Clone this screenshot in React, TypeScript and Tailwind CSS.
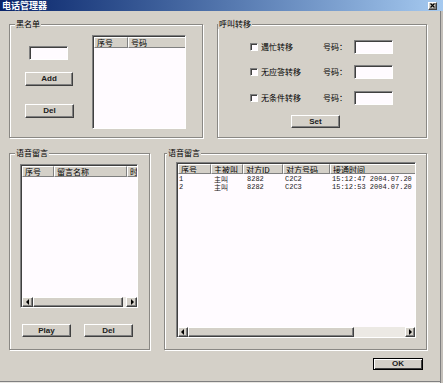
import React from 'react';

const raised =
  'border border-t-white border-l-white border-r-[#404040] border-b-[#404040] shadow-[inset_-1px_-1px_0_#808080] bg-[#d4d0c8]';
const sunken =
  'border border-t-[#808080] border-l-[#808080] border-r-white border-b-white shadow-[inset_1px_1px_0_#404040] bg-[#fffbff]';

interface BtnProps {
  label: string;
  className?: string;
  strong?: boolean;
}

const Btn: React.FC<BtnProps> = ({ label, className = '', strong }) => (
  <div
    className={`flex items-center justify-center text-[8px] font-bold leading-none text-[#202020] font-['Liberation_Sans',sans-serif] ${
      strong
        ? 'border border-black shadow-[inset_1px_1px_0_#fff,inset_-1px_-1px_0_#404040] bg-[#d4d0c8]'
        : raised
    } ${className}`}
  >
    {label}
  </div>
);

interface GroupProps {
  title: string;
  className?: string;
  labelClass?: string;
  children?: React.ReactNode;
}

const Group: React.FC<GroupProps> = ({ title, className = '', labelClass = 'left-[5px]', children }) => (
  <div className={`relative border border-[#8a8884] shadow-[inset_1px_1px_0_#fff,1px_1px_0_#fff] ${className}`}>
    <span className={`absolute -top-[6px] bg-[#d4d0c8] px-[1px] text-[8px] leading-[10px] text-black ${labelClass}`}>
      {title}
    </span>
    {children}
  </div>
);

const Arrow: React.FC<{ dir: 'left' | 'right'; className?: string }> = ({ dir, className = '' }) => (
  <div className={`flex h-full items-center justify-center ${raised} ${className}`}>
    <svg width="4" height="6" viewBox="0 0 4 6">
      {dir === 'left' ? <polygon points="3,0 3,6 0,3" fill="#000" /> : <polygon points="1,0 1,6 4,3" fill="#000" />}
    </svg>
  </div>
);

interface ScrollProps {
  arrow: string;
  thumb: string;
}

const HScroll: React.FC<ScrollProps> = ({ arrow, thumb }) => (
  <div className="flex h-[10px] shrink-0 bg-[#ece9e4]">
    <Arrow dir="left" className={arrow} />
    <div className={`h-full ${raised} ${thumb}`} />
    <div className="flex-1" />
    <Arrow dir="right" className={arrow} />
  </div>
);

interface Col {
  label: string;
  w: string;
}

const Header: React.FC<{ cols: Col[]; h: string }> = ({ cols, h }) => (
  <div className={`flex shrink-0 bg-[#d4d0c8] ${h}`}>
    {cols.map((c) => (
      <div
        key={c.label}
        className={`shrink-0 overflow-hidden whitespace-nowrap border-t border-l border-t-white border-l-white border-r border-b border-r-[#808080] border-b-[#808080] pl-[2px] text-[8px] leading-[9px] text-black ${c.w}`}
      >
        {c.label}
      </div>
    ))}
  </div>
);

const rows = [
  ['1', '主叫', '8282', 'C2C2', '15:12:47 2004.07.20'],
  ['2', '主叫', '8282', 'C2C3', '15:12:53 2004.07.20'],
];

export default function App() {
  return (
    <div className="flex h-[383px] w-[443px] flex-col overflow-hidden bg-[#d4d0c8] font-['Noto_Sans_CJK_SC',sans-serif] text-black">
      <div className="flex h-[11px] shrink-0 items-center justify-between bg-gradient-to-r from-[#0a246a] to-[#a6caf0] pl-[2px] pr-[6px]">
        <span className="text-[9px] font-bold leading-none text-white">电话管理器</span>
        <div className={`flex h-[8px] w-[9px] items-center justify-center ${raised}`}>
          <svg width="5" height="5" viewBox="0 0 5 5">
            <path d="M0.5 0.5L4.5 4.5M4.5 0.5L0.5 4.5" stroke="#000" strokeWidth="1.2" />
          </svg>
        </div>
      </div>

      <div className="flex flex-1">
        <div className="flex w-[440px] flex-col">
          {/* top row */}
          <div className="mt-[13px] flex gap-[14px] pl-[9px]">
            <Group title="黑名单" className="h-[114px] w-[194px]">
              <div className="flex pl-[15px] pt-[10px]">
                <div className="flex w-[49px] flex-col">
                  <div className={`ml-[4px] mt-[11px] h-[14px] w-[39px] ${sunken}`} />
                  <Btn label="Add" className="mt-[12px] h-[14px] w-[48px]" />
                  <Btn label="Del" className="mt-[18px] h-[14px] w-[49px]" />
                </div>
                <div className={`ml-[18px] flex h-[94px] w-[94px] flex-col overflow-hidden pl-[1px] pt-[1px] ${sunken}`}>
                  <Header
                    h="h-[11px]"
                    cols={[
                      { label: '序号', w: 'w-[34px]' },
                      { label: '号码', w: 'w-[58px]' },
                    ]}
                  />
                </div>
              </div>
            </Group>

            <Group title="呼叫转移" className="h-[114px] w-[210px]" labelClass="left-[0px]">
              <div className="flex flex-col pl-[32px] pt-[15px]">
                {['遇忙转移', '无应答转移', '无条件转移'].map((t, i) => (
                  <div key={t} className={`flex h-[14px] items-center ${i === 0 ? '' : i === 1 ? 'mt-[11px]' : 'mt-[12px]'}`}>
                    <div className={`h-[8px] w-[8px] ${sunken}`} />
                    <span className="ml-[3px] w-[62px] text-[8px] leading-none">{t}</span>
                    <span className="w-[31px] text-[8px] leading-none">号码：</span>
                    <div className={`h-[14px] w-[39px] ${sunken}`} />
                  </div>
                ))}
                <Btn label="Set" className="ml-[41px] mt-[10px] h-[13px] w-[49px]" />
              </div>
            </Group>
          </div>

          {/* second row */}
          <div className="mt-[15px] flex gap-[14px] pl-[9px]">
            <Group title="语音留言" className="h-[197px] w-[141px]">
              <div className="flex flex-col pl-[10px] pt-[10px]">
                <div className={`flex h-[144px] w-[118px] flex-col overflow-hidden pl-[1px] pt-[1px] ${sunken}`}>
                  <Header
                    h="h-[11px]"
                    cols={[
                      { label: '序号', w: 'w-[32px]' },
                      { label: '留言名称', w: 'w-[73px]' },
                      { label: '时长', w: 'w-[40px]' },
                    ]}
                  />
                  <div className="flex-1" />
                  <HScroll arrow="w-[11px]" thumb="w-[90px]" />
                </div>
                <div className="mt-[16px] flex gap-[13px] pl-[2px]">
                  <Btn label="Play" className="h-[13px] w-[49px]" />
                  <Btn label="Del" className="h-[13px] w-[49px]" />
                </div>
              </div>
            </Group>

            <Group title="语音留言" className="h-[197px] w-[263px]" labelClass="left-[2px]">
              <div className="pl-[11px] pt-[8px]">
                <div className={`flex h-[176px] w-[240px] flex-col overflow-hidden pl-[1px] pt-[1px] ${sunken}`}>
                  <Header
                    h="h-[10px]"
                    cols={[
                      { label: '序号', w: 'w-[33px]' },
                      { label: '主被叫', w: 'w-[32px]' },
                      { label: '对方ID', w: 'w-[40px]' },
                      { label: '对方号码', w: 'w-[47px]' },
                      { label: '接通时间', w: 'w-[86px]' },
                    ]}
                  />
                  <div className="flex-1 pt-[1px]">
                    {rows.map((r) => (
                      <div key={r[0]} className="flex h-[8px] items-center overflow-hidden text-[7px] leading-[8px] text-[#202020] font-['Liberation_Mono','Noto_Sans_CJK_SC',monospace]">
                        <span className="w-[33px] pl-[1px]">{r[0]}</span>
                        <span className="w-[32px] pl-[3px] font-['Noto_Sans_CJK_SC',sans-serif]">{r[1]}</span>
                        <span className="w-[40px] pl-[4px]">{r[2]}</span>
                        <span className="w-[47px] pl-[2px]">{r[3]}</span>
                        <span className="pl-[2px] whitespace-nowrap">{r[4]}</span>
                      </div>
                    ))}
                  </div>
                  <HScroll arrow="w-[10px]" thumb="w-[166px]" />
                </div>
              </div>
            </Group>
          </div>

          <div className="mt-[8px] flex pl-[373px]">
            <Btn label="OK" strong className="h-[12px] w-[50px]" />
          </div>
          <div className="flex-1" />
          <div className="h-[1px] bg-[#808080]" />
          <div className="h-[1px] bg-[#e8e6e2]" />
        </div>
        <div className="w-[3px] border-l border-[#808080] bg-[#c4c0ba]" />
      </div>
    </div>
  );
}
